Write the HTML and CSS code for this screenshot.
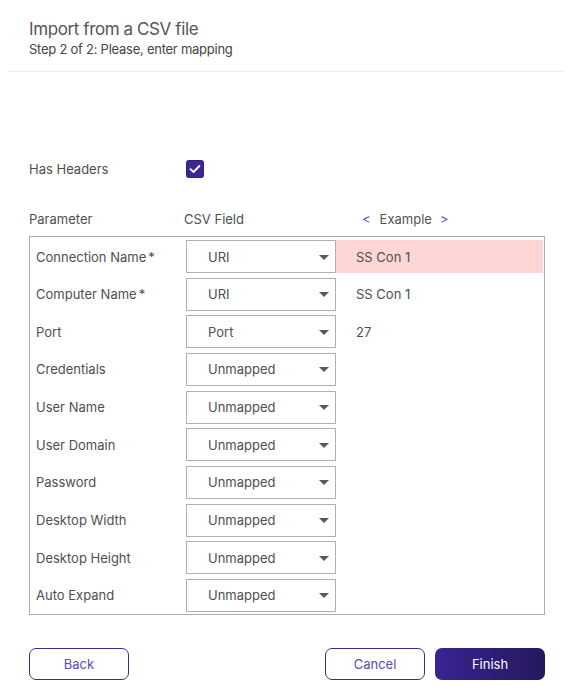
FILE: index.html
```html
<!DOCTYPE html>
<html>
<head>
<meta charset="utf-8">
<link rel="stylesheet" href="styles.css">
</head>
<body>
<div class="header">
  <div class="title">Import from a CSV file</div>
  <div class="subtitle">Step 2 of 2: Please, enter mapping</div>
</div>
<div class="main">
  <div class="has-headers">
    <span class="label-col">Has Headers</span>
    <span class="checkbox">
      <svg width="18" height="18" viewBox="0 0 18 18"><rect x="0.5" y="0.5" width="17" height="17" rx="2" fill="#3a2890" stroke="#2e1f7a"/><path d="M4.5 9.2 L7.6 12 L13.4 6" fill="none" stroke="#fff" stroke-width="1.8" stroke-linecap="round" stroke-linejoin="round"/></svg>
    </span>
  </div>
  <div class="col-heads">
    <span class="label-col">Parameter</span>
    <span class="csv-col">CSV Field</span>
    <span class="ex-col"><span class="nav prev">&lt;</span>Example<span class="nav next">&gt;</span></span>
  </div>
  <div class="table">
    <div class="row"><span class="param">Connection Name<span class="req">*</span></span><div class="select"><span>URI</span><i class="arrow"></i></div><span class="example error">SS Con 1</span></div>
    <div class="row"><span class="param">Computer Name<span class="req">*</span></span><div class="select"><span>URI</span><i class="arrow"></i></div><span class="example">SS Con 1</span></div>
    <div class="row"><span class="param">Port</span><div class="select"><span>Port</span><i class="arrow"></i></div><span class="example">27</span></div>
    <div class="row"><span class="param">Credentials</span><div class="select"><span>Unmapped</span><i class="arrow"></i></div><span class="example"></span></div>
    <div class="row"><span class="param">User Name</span><div class="select"><span>Unmapped</span><i class="arrow"></i></div><span class="example"></span></div>
    <div class="row"><span class="param">User Domain</span><div class="select"><span>Unmapped</span><i class="arrow"></i></div><span class="example"></span></div>
    <div class="row"><span class="param">Password</span><div class="select"><span>Unmapped</span><i class="arrow"></i></div><span class="example"></span></div>
    <div class="row"><span class="param">Desktop Width</span><div class="select"><span>Unmapped</span><i class="arrow"></i></div><span class="example"></span></div>
    <div class="row"><span class="param">Desktop Height</span><div class="select"><span>Unmapped</span><i class="arrow"></i></div><span class="example"></span></div>
    <div class="row"><span class="param">Auto Expand</span><div class="select"><span>Unmapped</span><i class="arrow"></i></div><span class="example"></span></div>
  </div>
  <div class="buttons">
    <button class="btn outline">Back</button>
    <div class="right">
      <button class="btn outline">Cancel</button>
      <button class="btn primary">Finish</button>
    </div>
  </div>
</div>
</body>
</html>
```
FILE: styles.css
```css
* { box-sizing: border-box; }
body {
  margin: 0;
  font-family: Inter, "Noto Sans", sans-serif;
  color: #4f4f4f;
  background: #fff;
}
.header {
  margin: 0 8px;
  padding: 18px 21px 13px;
  border-bottom: 1px solid #ededed;
}
.title {
  font-size: 17px;
  line-height: 22px;
  color: #555;
  letter-spacing: -0.4px;
}
.subtitle {
  font-size: 13px;
  line-height: 18px;
  color: #454545;
  letter-spacing: -0.25px;
}
.main {
  padding: 0 28px 0 29px;
}
.label-col {
  display: inline-block;
  width: 157px;
}
.has-headers {
  margin-top: 88px;
  display: flex;
  align-items: center;
  height: 18px;
  font-size: 13px;
}
.checkbox {
  display: flex;
  width: 18px;
  height: 18px;
}
.col-heads {
  margin-top: 32px;
  display: flex;
  align-items: center;
  height: 18px;
  font-size: 13px;
}
.col-heads .label-col { width: 155px; }
.csv-col { width: 178px; }
.ex-col { color: #555; }
.nav { color: #5a48c0; }
.prev { margin-right: 9px; }
.next { margin-left: 8px; }
.table {
  margin-top: 8px;
  width: 516px;
  border: 1px solid #aeaeae;
  padding: 3px 1px 2px 6px;
  display: flex;
  flex-direction: column;
  gap: 4.67px;
}
.row {
  display: flex;
  align-items: center;
  height: 33px;
  font-size: 13px;
}
.param {
  width: 150px;
  flex: none;
}
.req { margin-left: 2px; }
.select {
  flex: none;
  width: 150px;
  height: 33px;
  border: 1px solid #b0b0b0;
  display: flex;
  align-items: center;
  justify-content: space-between;
  padding: 0 6px 0 21px;
  color: #4f4f4f;
}
.arrow {
  width: 0;
  height: 0;
  border-left: 5px solid transparent;
  border-right: 5px solid transparent;
  border-top: 5px solid #5a5a5a;
  margin-top: 1px;
}
.example {
  flex: 1;
  height: 33px;
  display: flex;
  align-items: center;
  padding-left: 20px;
}
.example.error { background: #ffd6d6; }
.buttons {
  margin-top: 33px;
  display: flex;
  justify-content: space-between;
  width: 516px;
}
.right { display: flex; gap: 10px; }
.btn {
  font-family: Inter, "Noto Sans", sans-serif;
  font-size: 13px;
  height: 32px;
  border-radius: 7px;
  cursor: pointer;
}
.outline {
  width: 100px;
  background: #fff;
  border: 1px solid #3b2a94;
  color: #5b4cb8;
}
.primary {
  width: 110px;
  border: none;
  color: #fff;
  background: linear-gradient(90deg, #3a2493, #25185e);
}
```
